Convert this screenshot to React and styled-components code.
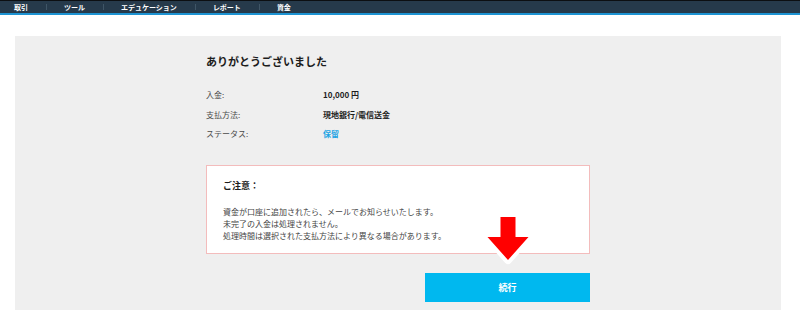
import React from 'react';
import styled, { createGlobalStyle } from 'styled-components';

const GlobalStyle = createGlobalStyle`
  html, body {
    margin: 0;
    padding: 0;
    background: #ffffff;
  }
  body {
    font-family: "Noto Sans CJK JP", "Noto Sans", sans-serif;
    color: #222;
  }
`;

const TopBar = styled.nav`
  display: flex;
  align-items: center;
  height: 12px;
  background: #263a4b;
  border-top: 1px solid #0c0f12;
  border-bottom: 2px solid #1d93d2;
`;

const NavItem = styled.a`
  position: relative;
  padding: 0 18px;
  font-size: 7px;
  font-weight: 700;
  color: #ffffff;
  line-height: 12px;
  &:first-child {
    padding-left: 14px;
  }
  & + &::before {
    content: '';
    position: absolute;
    left: 0;
    top: 3px;
    height: 6px;
    border-left: 1px solid #3f5566;
  }
`;

const Page = styled.main`
  padding: 21px 19px 0 15px;
`;

const Panel = styled.section`
  box-sizing: border-box;
  background: #efefef;
  min-height: 274px;
  padding-top: 17px;
  display: flex;
  justify-content: center;
`;

const Column = styled.div`
  width: 384px;
  display: flex;
  flex-direction: column;
`;

const Title = styled.h1`
  margin: 0 0 16px;
  font-size: 11px;
  font-weight: 700;
  line-height: 16px;
  color: #1c1c1c;
`;

const Row = styled.div`
  display: grid;
  grid-template-columns: 117px 1fr;
  height: 19.5px;
  align-items: center;
  font-size: 8px;
`;

const Label = styled.span`
  color: #4a4a4a;
`;

const Value = styled.span`
  font-weight: 700;
  color: ${p => (p.$accent ? '#1aa3e3' : '#1e1e1e')};
`;

const Notice = styled.div`
  margin-top: 21px;
  background: #ffffff;
  border: 1px solid #f3bcbc;
  padding: 14px 16px 11px;
`;

const NoticeTitle = styled.h2`
  margin: 0 0 14px;
  font-size: 9px;
  font-weight: 700;
  line-height: 12px;
  color: #1c1c1c;
`;

const NoticeText = styled.p`
  margin: 0;
  font-size: 8px;
  line-height: 12px;
  color: #444;
`;

const Actions = styled.div`
  display: flex;
  justify-content: flex-end;
  margin-top: 18px;
`;

const ButtonWrap = styled.div`
  position: relative;
`;

const ContinueButton = styled.button`
  width: 165px;
  height: 29px;
  border: none;
  background: #00b8ef;
  color: #ffffff;
  font-family: inherit;
  font-size: 9px;
  font-weight: 700;
  cursor: pointer;
`;

const Arrow = styled.svg`
  position: absolute;
  left: 50%;
  bottom: 100%;
  margin-bottom: 5px;
  transform: translateX(-50%);
  overflow: visible;
`;

const details = [
  { label: '入金:', value: '10,000 円' },
  { label: '支払方法:', value: '現地銀行/電信送金' },
  { label: 'ステータス:', value: '保留', accent: true },
];

const navItems = ['取引', 'ツール', 'エデュケーション', 'レポート', '資金'];

export default function App() {
  return (
    <>
      <GlobalStyle />
      <TopBar>
        {navItems.map(item => (
          <NavItem key={item}>{item}</NavItem>
        ))}
      </TopBar>
      <Page>
        <Panel>
          <Column>
            <Title>ありがとうございました</Title>
            {details.map(d => (
              <Row key={d.label}>
                <Label>{d.label}</Label>
                <Value $accent={d.accent}>{d.value}</Value>
              </Row>
            ))}
            <Notice>
              <NoticeTitle>ご注意：</NoticeTitle>
              <NoticeText>
                資金が口座に追加されたら、メールでお知らせいたします。
                <br />
                未完了の入金は処理されません。
                <br />
                処理時間は選択された支払方法により異なる場合があります。
              </NoticeText>
            </Notice>
            <Actions>
              <ButtonWrap>
                <Arrow width="50" height="54" viewBox="0 0 50 54">
                  <polygon
                    points="17.5,4 32.5,4 32.5,24 45.5,24 25,47 4.5,24 17.5,24"
                    fill="#ff0000"
                    stroke="#ffffff"
                    strokeWidth="8"
                    strokeLinejoin="round"
                    paintOrder="stroke"
                  />
                </Arrow>
                <ContinueButton>続行</ContinueButton>
              </ButtonWrap>
            </Actions>
          </Column>
        </Panel>
      </Page>
    </>
  );
}
